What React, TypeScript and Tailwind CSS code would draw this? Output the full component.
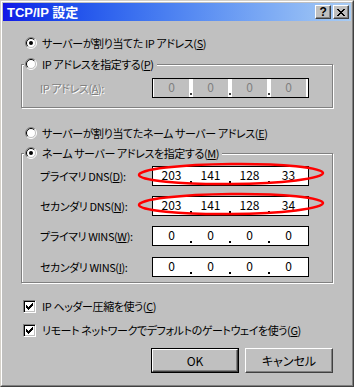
const jp = "font-['Noto_Sans_CJK_JP',sans-serif] [font-feature-settings:'palt']";

function Radio({ checked }: { checked?: boolean }) {
  return (
    <svg width="12" height="12" viewBox="0 0 12 12" className="shrink-0">
      <circle cx="6" cy="6" r="5" fill="#fff" />
      <path d="M2.1 9.9 A5.5 5.5 0 0 1 9.9 2.1" stroke="#808080" fill="none" />
      <path d="M9.9 2.1 A5.5 5.5 0 0 1 2.1 9.9" stroke="#fff" fill="none" />
      <path d="M2.8 9.2 A4.5 4.5 0 0 1 9.2 2.8" stroke="#000" fill="none" />
      <path d="M9.2 2.8 A4.5 4.5 0 0 1 2.8 9.2" stroke="#c0c0c0" fill="none" />
      {checked && <circle cx="6" cy="6" r="2" fill="#000" />}
    </svg>
  );
}

function Check() {
  const cols = [5, 6, 7, 6, 5, 4, 3];
  return (
    <div className="w-[13px] h-[13px] shrink-0 bg-white border border-t-[#808080] border-l-[#808080] border-r-white border-b-white shadow-[inset_1px_1px_0_#000,inset_-1px_-1px_0_#c0c0c0]">
      <svg width="11" height="11" viewBox="0 0 11 11" shapeRendering="crispEdges">
        {cols.map((y, i) => (
          <rect key={i} x={2 + i} y={y - 1} width="1" height="3" fill="#000" />
        ))}
      </svg>
    </div>
  );
}

function IpBox({ values, disabled }: { values: string[]; disabled?: boolean }) {
  return (
    <div className="flex h-[20px] w-[157px] border border-black bg-white px-[1px] text-[12px] tracking-normal">
      {values.map((v, i) => (
        <div key={i} className="flex">
          {i > 0 && (
            <div className="w-[4px] flex justify-center items-end pb-[2px]">
              <div className={disabled ? "w-[2px] h-[2px] bg-[#404040]" : "w-[2px] h-[2px] bg-black"} />
            </div>
          )}
          <div
            className={
              disabled
                ? "w-[35px] flex items-center justify-center pb-[3px] bg-[#c0c0c0] text-[#808080]"
                : "w-[35px] flex items-center justify-center pb-[3px] text-black"
            }
          >
            {v}
          </div>
        </div>
      ))}
    </div>
  );
}

function Row({ label, values }: { label: React.ReactNode; values: string[] }) {
  return (
    <div className="flex items-center h-[20px] pl-[18px]">
      <div className="w-[112px]">{label}</div>
      <IpBox values={values} />
    </div>
  );
}

export default function App() {
  return (
    <div className={`relative w-[354px] h-[387px] text-[11px] tracking-[-0.4px] leading-none text-black ${jp}`}>
      <div className="w-full h-full bg-[#c0c0c0] border border-t-[#d4d0c8] border-l-[#d4d0c8] border-r-[#404040] border-b-[#404040]">
        <div className="h-full flex flex-col p-[1px] border border-t-white border-l-white border-r-[#808080] border-b-[#808080]">
          {/* title bar */}
          <div className="h-[18px] flex items-center justify-between pl-[4px] pr-[2px] bg-gradient-to-r from-[#1414e6] to-[#a8ccf4]">
            <span className="text-white font-bold text-[13px] tracking-normal font-['Liberation_Sans','Noto_Sans_CJK_JP',sans-serif]">
              TCP/IP 設定
            </span>
            <div className="flex gap-[2px]">
              <div className="w-[16px] h-[14px] flex items-center justify-center bg-[#c0c0c0] border border-t-white border-l-white border-r-[#404040] border-b-[#404040] shadow-[inset_-1px_-1px_0_#808080] font-bold text-[12px] font-['Liberation_Sans',sans-serif]">
                ?
              </div>
              <div className="w-[16px] h-[14px] flex items-center justify-center bg-[#c0c0c0] border border-t-white border-l-white border-r-[#404040] border-b-[#404040] shadow-[inset_-1px_-1px_0_#808080]">
                <svg width="8" height="7" viewBox="0 0 8 7" shapeRendering="crispEdges">
                  <path d="M0 0h2v1H0zM6 0h2v1H6zM1 1h2v1H1zM5 1h2v1H5zM2 2h4v1H2zM3 3h2v1H3zM2 4h4v1H2zM1 5h2v1H1zM5 5h2v1H5zM0 6h2v1H0zM6 6h2v1H6z" fill="#000" />
                </svg>
              </div>
            </div>
          </div>

          {/* content */}
          <div className="flex flex-col">
            <div className="mt-[14px] ml-[22px] h-[16px] flex items-center gap-[5px]">
              <Radio checked />
              <span>サーバーが割り当てた IP アドレス(<u>S</u>)</span>
            </div>

            <div className="mt-[13px] ml-[18px] w-[312px] h-[44px] flex flex-col border border-[#808080] shadow-[inset_1px_1px_0_#fff,1px_1px_0_#fff]">
              <div className="-mt-[9px] ml-[2px] pl-[1px] pr-[3px] w-fit h-[16px] flex items-center gap-[5px] bg-[#c0c0c0]">
                <Radio />
                <span>IP アドレスを指定する(<u>P</u>)</span>
              </div>
              <div className="mt-[6px] flex items-center h-[20px] pl-[18px]">
                <div className="w-[112px] text-[#808080] [text-shadow:1px_1px_0_#fff]">
                  IP アドレス(<u>A</u>):
                </div>
                <IpBox values={["0", "0", "0", "0"]} disabled />
              </div>
            </div>

            <div className="mt-[17px] ml-[22px] h-[16px] flex items-center gap-[5px]">
              <Radio />
              <span>サーバーが割り当てたネーム サーバー アドレス(<u>E</u>)</span>
            </div>

            <div className="mt-[12px] ml-[18px] w-[312px] h-[130px] flex flex-col border border-[#808080] shadow-[inset_1px_1px_0_#fff,1px_1px_0_#fff]">
              <div className="-mt-[9px] ml-[2px] pl-[1px] pr-[3px] w-fit h-[16px] flex items-center gap-[5px] bg-[#c0c0c0]">
                <Radio checked />
                <span>ネーム サーバー アドレスを指定する(<u>M</u>)</span>
              </div>
              <div className="mt-[5px] flex flex-col gap-[10px]">
                <Row label={<>プライマリ DNS(<u>D</u>):</>} values={["203", "141", "128", "33"]} />
                <Row label={<>セカンダリ DNS(<u>N</u>):</>} values={["203", "141", "128", "34"]} />
                <Row label={<>プライマリ WINS(<u>W</u>):</>} values={["0", "0", "0", "0"]} />
                <div className="mt-[1px]">
                  <Row label={<>セカンダリ WINS(<u>I</u>):</>} values={["0", "0", "0", "0"]} />
                </div>
              </div>
            </div>

            <div className="mt-[15px] ml-[20px] h-[16px] flex items-center gap-[6px]">
              <Check />
              <span>IP ヘッダー圧縮を使う(<u>C</u>)</span>
            </div>
            <div className="mt-[8px] ml-[20px] h-[16px] flex items-center gap-[6px]">
              <Check />
              <span>リモート ネットワークでデフォルトのゲートウェイを使う(<u>G</u>)</span>
            </div>

            <div className="mt-[10px] pr-[18px] flex justify-end gap-[6px] text-[12px] tracking-normal">
              <div className="w-[88px] h-[25px] border border-black">
                <div className="w-full h-full flex items-center justify-center border border-t-white border-l-white border-r-[#404040] border-b-[#404040] shadow-[inset_-1px_-1px_0_#808080]">
                  OK
                </div>
              </div>
              <div className="w-[88px] h-[25px] flex items-center justify-center border border-t-white border-l-white border-r-[#404040] border-b-[#404040] shadow-[inset_-1px_-1px_0_#808080]">
                キャンセル
              </div>
            </div>
          </div>
        </div>
      </div>

      <svg className="absolute left-0 top-0 pointer-events-none" width="354" height="387">
        <ellipse cx="231" cy="174" rx="92" ry="10" transform="rotate(-0.6 231 174)" fill="none" stroke="#ff0000" strokeWidth="2.5" />
        <ellipse cx="231" cy="204" rx="92" ry="10" transform="rotate(-0.6 231 204)" fill="none" stroke="#ff0000" strokeWidth="2.5" />
      </svg>
    </div>
  );
}
